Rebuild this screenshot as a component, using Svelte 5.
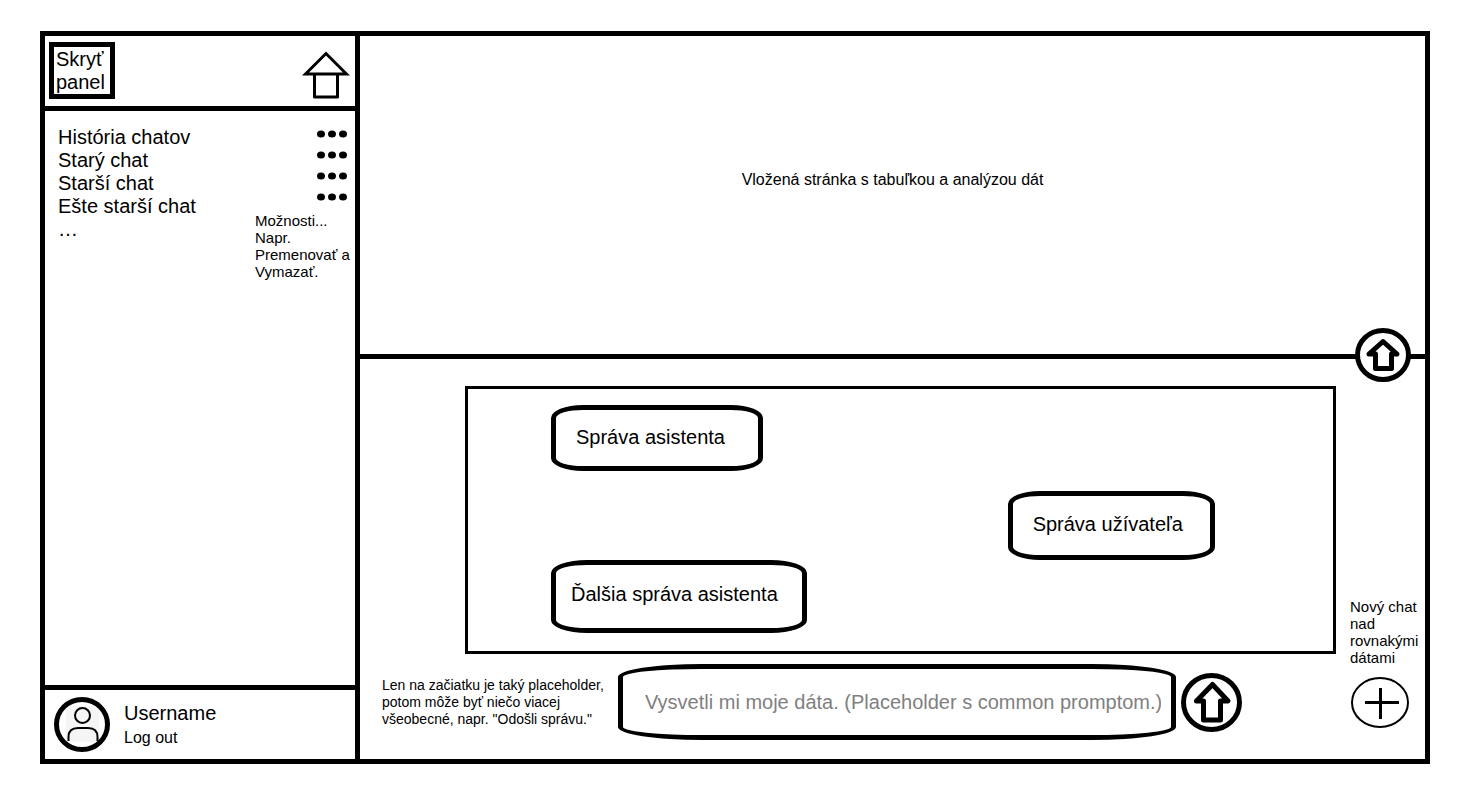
<script>
  const chats = ['História chatov', 'Starý chat', 'Starší chat', 'Ešte starší chat'];
  const messages = [
    { from: 'assistant', text: 'Správa asistenta' },
    { from: 'user', text: 'Správa užívateľa' },
    { from: 'assistant long', text: 'Ďalšia správa asistenta' }
  ];
  let prompt = $state('');
</script>

<div class="frame">
  <aside class="sidebar">
    <header class="side-head">
      <button class="hide">Skryť panel</button>
      <a class="home" href="#home" aria-label="Domov">
        <svg width="48" height="49" viewBox="0 0 48 49" fill="none" stroke="#000" stroke-width="3">
          <path d="M3.500 24 24 3.500 44.500 24Z" />
          <path d="M12.500 24V47H35.500V24" stroke-linejoin="round" />
        </svg>
      </a>
    </header>

    <nav class="history">
      <ul class="chats">
        {#each chats as chat}
          <li><a href="#chat">{chat}</a></li>
        {/each}
        <li>…</li>
      </ul>
      <div class="options">
        {#each chats as chat}
          <button class="dots" aria-label={`Možnosti: ${chat}`}>
            <svg width="30" height="8" viewBox="0 0 30 8">
              <ellipse cx="4" cy="4" rx="4" ry="3.500" />
              <ellipse cx="15" cy="4" rx="4" ry="3.500" />
              <ellipse cx="26" cy="4" rx="4" ry="3.500" />
            </svg>
          </button>
        {/each}
        <p class="note">Možnosti... Napr. Premenovať a Vymazať.</p>
      </div>
    </nav>

    <footer class="account">
      <svg width="56" height="55" viewBox="0 0 56 55" fill="none" stroke="#000">
        <path d="M12 9H45V45H12Z" fill="#f5f5f5" stroke="none" />
        <ellipse cx="28" cy="27.500" rx="25.500" ry="25" stroke-width="5" />
        <circle cx="28.500" cy="18.500" r="7.500" stroke-width="2" />
        <path d="M14.500 44V40Q14.500 31 24 31H34Q43.500 31 43.500 40V44" stroke-width="2" />
      </svg>
      <div class="who">
        <span class="name">Username</span>
        <a class="logout" href="#logout">Log out</a>
      </div>
    </footer>
  </aside>

  <main class="main">
    <section class="embed">
      <p>Vložená stránka s tabuľkou a analýzou dát</p>
    </section>

    <section class="chat">
      <button class="expand" aria-label="Zväčšiť chat">
        <svg width="56" height="54" viewBox="0 0 56 54" stroke="#000" stroke-width="5">
          <ellipse cx="28" cy="27" rx="25.500" ry="24.500" fill="#fff" />
          <path d="M28 13.500 42 26H36.500V40.500H20.500V26H14Z" fill="none" stroke-linejoin="round" />
        </svg>
      </button>

      <div class="talk">
        <div class="messages">
          {#each messages as message}
            <p class="bubble {message.from}">{message.text}</p>
          {/each}
        </div>
        <form class="composer">
          <p class="note hint">
            Len na začiatku je taký placeholder,<br />
            potom môže byť niečo viacej<br />
            všeobecné, napr. "Odošli správu."
          </p>
          <input
            class="prompt"
            type="text"
            aria-label="Správa"
            placeholder="Vysvetli mi moje dáta. (Placeholder s common promptom.)"
            bind:value={prompt}
          />
          <button class="send" type="button" aria-label="Odoslať">
            <svg width="61" height="59" viewBox="0 0 61 59" fill="none" stroke="#000" stroke-width="5">
              <ellipse cx="30.500" cy="29.500" rx="28" ry="27" />
              <path d="M31.500 11.500 47 28H39.500V47H22.500V28H15.500Z" stroke-linejoin="round" />
            </svg>
          </button>
        </form>
      </div>

      <div class="new-chat">
        <label class="note" for="new">Nový chat nad rovnakými dátami</label>
        <button id="new" class="plus">
          <svg width="60" height="51" viewBox="0 0 60 51" fill="none" stroke="#000">
            <ellipse cx="30" cy="25.500" rx="28" ry="24.500" stroke-width="2" />
            <path d="M15 25.500H49M30.500 11V42" stroke-width="3" />
          </svg>
        </button>
      </div>
    </section>
  </main>
</div>

<style>
  :global(body) {
    background: #fff;
  }
  :global(#app) {
    display: flow-root;
  }
  .frame,
  .frame * {
    box-sizing: border-box;
  }
  .frame {
    display: flex;
    min-height: calc(100vh - 56px);
    margin: 31px 43px 25px 40px;
    border: 5px solid #000;
    color: #000;
    font: 20px/23px 'Liberation Sans', Arial, sans-serif;
  }
  p,
  ul {
    margin: 0;
    padding: 0;
    list-style: none;
  }
  a {
    color: inherit;
    text-decoration: none;
  }
  button {
    padding: 0;
    border: 0;
    background: none;
    color: inherit;
    font: inherit;
    cursor: pointer;
  }
  svg {
    display: block;
  }
  .note {
    font-size: 15px;
    line-height: 17px;
  }

  .sidebar {
    display: flex;
    flex: none;
    flex-direction: column;
    width: 315px;
    border-right: 5px solid #000;
  }
  .side-head {
    display: flex;
    justify-content: space-between;
    align-items: flex-end;
    height: 75px;
    padding: 0 5px 7px 4px;
    border-bottom: 5px solid #000;
  }
  .hide {
    width: 66px;
    height: 57px;
    padding-left: 2px;
    border: 5px solid #000;
    text-align: left;
  }
  .history {
    display: flex;
    flex: 1;
    justify-content: space-between;
    padding: 12px 0 0 13px;
  }
  .chats {
    padding-top: 3px;
  }
  .options {
    display: flex;
    flex-direction: column;
    width: 100px;
  }
  .dots {
    align-self: flex-end;
    height: 21px;
    margin-right: 8px;
  }
  .options .note {
    padding-top: 5px;
  }
  .account {
    display: flex;
    align-items: center;
    gap: 14px;
    height: 74px;
    padding: 0 9px;
    border-top: 5px solid #000;
  }
  .who {
    display: flex;
    flex-direction: column;
    gap: 4px;
  }
  .logout {
    font-size: 16px;
    line-height: 18px;
  }

  .main {
    display: flex;
    flex: 1;
    flex-direction: column;
    min-width: 0;
  }
  .embed {
    display: flex;
    flex: 1;
    align-items: center;
    justify-content: center;
    padding-bottom: 32px;
    font-size: 16px;
  }
  .chat {
    position: relative;
    display: flex;
    gap: 14px;
    border-top: 5px solid #000;
    padding-top: 27px;
  }
  .expand {
    position: absolute;
    top: -31px;
    right: 14px;
  }
  .talk {
    flex: 1;
    min-width: 0;
  }
  .messages {
    display: flex;
    flex-direction: column;
    align-items: flex-start;
    height: 268px;
    margin-left: 105px;
    padding: 16px 118px 0 83px;
    border: 3px solid #000;
  }
  .bubble {
    min-height: 66px;
    padding: 16px 33px 0 20px;
    border: 5px solid #000;
    border-radius: 32px / 13px;
  }
  .bubble.user {
    align-self: flex-end;
    min-height: 69px;
    margin-top: 20px;
    padding: 17px 27px 0 20px;
  }
  .bubble.long {
    min-height: 73px;
    padding: 18px 24px 0 15px;
    border-radius: 36px / 13px;
  }
  .composer {
    display: flex;
    align-items: center;
    padding: 10px 94px 19px 22px;
  }
  .hint {
    flex: none;
    width: 236px;
    font-size: 14px;
    white-space: nowrap;
  }
  .prompt {
    flex: 1;
    min-width: 0;
    height: 76px;
    margin-right: 5px;
    padding: 0 10px 0 22px;
    border: 5px solid #000;
    border-radius: 84px / 13px;
    background: none;
    font: inherit;
  }
  .prompt::placeholder {
    color: #7f7f7f;
    opacity: 1;
  }
  .new-chat {
    display: flex;
    flex: none;
    flex-direction: column;
    justify-content: flex-end;
    gap: 11px;
    width: 75px;
    padding-bottom: 31px;
  }
  .plus {
    align-self: flex-start;
  }
</style>
